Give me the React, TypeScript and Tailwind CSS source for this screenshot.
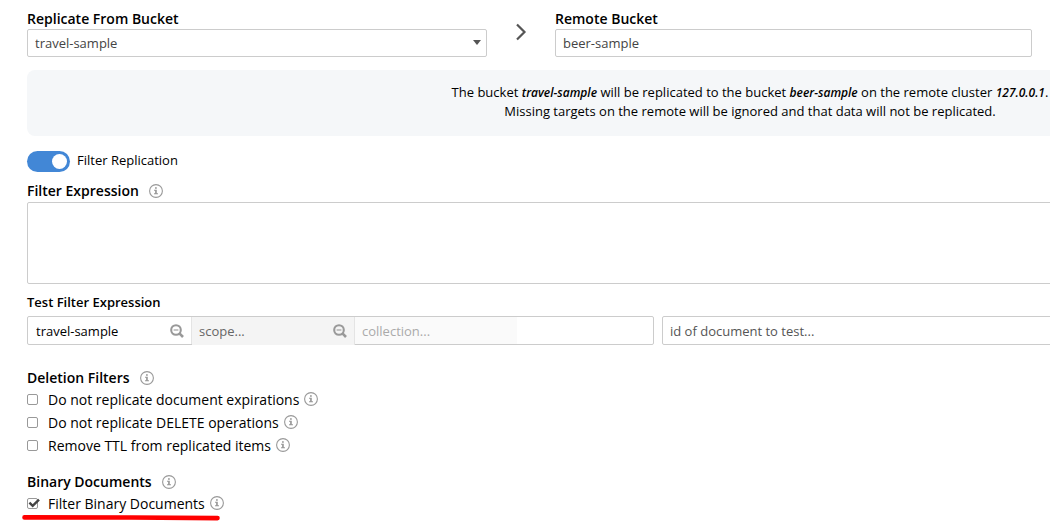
import { useState } from "react";
import clsx from "clsx";

const InfoIcon = () => (
  <svg viewBox="0 0 14 14" className="size-[14px] shrink-0 text-[#999]" fill="none" aria-hidden="true">
    <circle cx="7" cy="7" r="6.4" stroke="currentColor" strokeWidth="1.1" />
    <path d="M6 3.3h1.8v1.5H6zM5 5.8h2.8v3.4H9v1H5v-1h1.1V6.8H5z" fill="currentColor" />
  </svg>
);

const SearchMinusIcon = () => (
  <svg viewBox="0 0 14 14" className="size-[14px] shrink-0 text-[#999]" fill="none" stroke="currentColor" aria-hidden="true">
    <circle cx="6" cy="6" r="4.8" strokeWidth="2.1" />
    <path d="M3.6 6h4.8" strokeWidth="1.1" />
    <path d="M9.4 9.4l3.6 3.6" strokeWidth="2.6" />
  </svg>
);

type CheckRowProps = {
  id: string;
  label: string;
  checked: boolean;
  onChange: () => void;
};

const CheckRow = ({ id, label, checked, onChange }: CheckRowProps) => (
  <div className="flex h-[23px] items-center">
    <span className="relative flex size-[11px] shrink-0">
      <input
        type="checkbox"
        id={id}
        checked={checked}
        onChange={onChange}
        className="size-[11px] appearance-none rounded-[2px] border border-[#999] bg-white"
      />
      {checked && (
        <svg viewBox="0 0 13 11" className="pointer-events-none absolute left-0 top-0 h-[11px] w-[13px]" fill="none">
          <path d="M2.4 4.6l3.3 3.3L12 1.6" stroke="#444" strokeWidth="2.4" />
        </svg>
      )}
    </span>
    <label htmlFor={id} className="pl-[10px] text-sm leading-5">{label}</label>
    <span className="pb-[2px] pl-[5px]"><InfoIcon /></span>
  </div>
);

const App = () => {
  const [bucket, setBucket] = useState("travel-sample");
  const [remote, setRemote] = useState("beer-sample");
  const [filtering, setFiltering] = useState(true);
  const [scopeBucket, setScopeBucket] = useState("travel-sample");
  const [filters, setFilters] = useState({ expirations: false, deletes: false, ttl: false, binary: true });

  const toggle = (key: keyof typeof filters) => setFilters((prev) => ({ ...prev, [key]: !prev[key] }));

  return (
    <main className="overflow-x-hidden bg-white pl-[27px] pt-2 font-['Open_Sans',sans-serif] text-[13px] leading-5 text-black">
      <form>
        <div className="flex items-start pr-[18px]">
          <div className="flex min-w-0 flex-[460] flex-col">
            <label htmlFor="from" className="text-sm font-semibold leading-[21px]">Replicate From Bucket</label>
            <div className="relative">
              <select
                id="from"
                value={bucket}
                onChange={(e) => setBucket(e.target.value)}
                className="h-7 w-full appearance-none rounded-[2px] border border-[#ccc] bg-white px-[7px] text-[#444]"
              >
                <option>travel-sample</option>
                <option>beer-sample</option>
              </select>
              <svg viewBox="0 0 8 5" className="pointer-events-none absolute right-[6px] top-[11px] h-[5px] w-2">
                <path d="M0 0h8L4 5z" fill="#555" />
              </svg>
            </div>
          </div>
          <div className="flex w-[68px] shrink-0 justify-center pt-[15px]">
            <svg viewBox="0 0 12 18" className="h-[18px] w-3" fill="none">
              <path d="M2 1.5l7.5 7.5L2 16.5" stroke="#555" strokeWidth="2.2" />
            </svg>
          </div>
          <div className="flex min-w-0 flex-[477] flex-col">
            <label htmlFor="remote" className="text-sm font-semibold leading-[21px]">Remote Bucket</label>
            <input
              id="remote"
              value={remote}
              onChange={(e) => setRemote(e.target.value)}
              className="h-7 w-full rounded-[2px] border border-[#ccc] px-[7px] text-[#444]"
            />
          </div>
        </div>

        {/* the lower part is wider than the window and runs off its right edge */}
        <div className="-mr-[423px]">
          <div className="mt-[13px] rounded-lg bg-[#f5f7f9] pb-[15px] pt-[13px] text-center leading-[19px]">
            <p>
              The bucket <em className="text-xs font-semibold">{bucket}</em> will be replicated to the bucket{" "}
              <em className="text-xs font-semibold">{remote}</em> on the remote cluster{" "}
              <em className="text-xs font-semibold">127.0.0.1</em>.
            </p>
            <p>Missing targets on the remote will be ignored and that data will not be replicated.</p>
          </div>

          <div className="mt-[15px] flex h-[21px] items-center">
            <button
              type="button"
              role="switch"
              id="filtering"
              aria-checked={filtering}
              onClick={() => setFiltering(!filtering)}
              className={clsx("flex h-[21px] w-[43px] items-center rounded-full px-[3px]", filtering ? "justify-end bg-[#4287d6]" : "justify-start bg-[#999]")}
            >
              <span className="size-[15px] rounded-full bg-white" />
            </button>
            <label htmlFor="filtering" className="pb-[3px] pl-[7px]">Filter Replication</label>
          </div>

          <div className="mt-2 flex h-[22px] items-center">
            <label htmlFor="expression" className="text-sm font-semibold leading-5">Filter Expression</label>
            <span className="pl-[10px]"><InfoIcon /></span>
          </div>
          <textarea id="expression" className="block h-[82px] w-full resize-none rounded-[2px] border border-[#ccc] p-[7px]" />

          <h3 className="mt-2 pb-1 font-semibold leading-5">Test Filter Expression</h3>
          <div className="flex">
            <div className="flex h-[29px] w-[627px] shrink-0 rounded-[2px] border border-[#ccc]">
              <div className="flex w-[164px] items-center border-r border-[#e4e4e4] pr-[7px]">
                <input
                  aria-label="bucket"
                  value={scopeBucket}
                  onChange={(e) => setScopeBucket(e.target.value)}
                  className="w-full min-w-0 pl-2"
                />
                <SearchMinusIcon />
              </div>
              <div className="-mb-px flex w-[163px] items-center border-r border-[#e4e4e4] bg-[#f4f4f4] pr-[7px]">
                <input aria-label="scope" placeholder="scope..." className="w-full min-w-0 pl-[7px] placeholder:text-[#666]" />
                <SearchMinusIcon />
              </div>
              <div className="flex w-[162px] items-center bg-[#fafafa]">
                <input aria-label="collection" placeholder="collection..." disabled className="w-full min-w-0 pl-[7px] placeholder:text-[#aaa]" />
              </div>
            </div>
            <input
              aria-label="document id"
              placeholder="id of document to test..."
              className="ml-2 h-[29px] min-w-0 flex-1 rounded-[2px] border border-[#ccc] px-[7px] placeholder:text-[#555]"
            />
          </div>
        </div>

        <div className="mt-[22px] flex h-[21px] items-center">
          <h3 className="text-sm font-semibold leading-5">Deletion Filters</h3>
          <span className="pl-[10px]"><InfoIcon /></span>
        </div>
        <CheckRow id="expirations" label="Do not replicate document expirations" checked={filters.expirations} onChange={() => toggle("expirations")} />
        <CheckRow id="deletes" label="Do not replicate DELETE operations" checked={filters.deletes} onChange={() => toggle("deletes")} />
        <CheckRow id="ttl" label="Remove TTL from replicated items" checked={filters.ttl} onChange={() => toggle("ttl")} />

        <div className="mt-[14px] flex h-[21px] items-center">
          <h3 className="text-sm font-semibold leading-5">Binary Documents</h3>
          <span className="pl-[10px]"><InfoIcon /></span>
        </div>
        <CheckRow id="binary" label="Filter Binary Documents" checked={filters.binary} onChange={() => toggle("binary")} />
        <svg viewBox="0 0 198 8" className="-ml-[5px] h-2 w-[198px]" fill="none">
          <path d="M2.5 2.4L110 2.5L195.5 3.1" stroke="#f00" strokeWidth="4.6" strokeLinecap="round" />
        </svg>
      </form>
    </main>
  );
};

export default App;
